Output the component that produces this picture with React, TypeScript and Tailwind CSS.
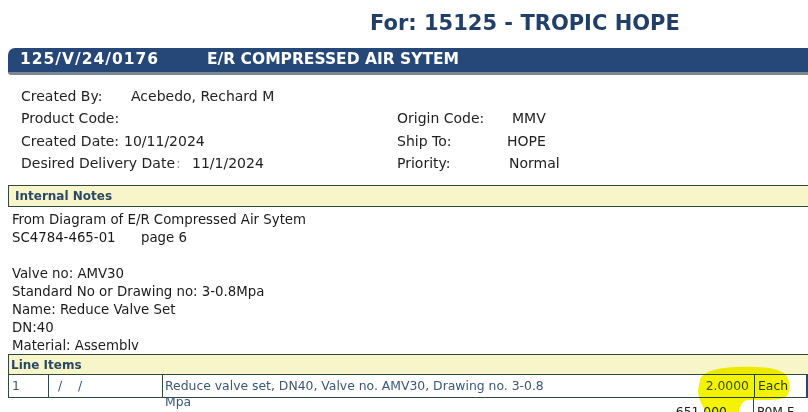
import React from "react";

const verdana = { fontFamily: '"DejaVu Sans", Verdana, sans-serif' };
const tahoma = { fontFamily: '"DejaVu Sans Condensed", "Liberation Sans", sans-serif' };

function InfoRow({ label, value, labelW, className = "" }: { label: string; value?: string; labelW?: string; className?: string }) {
  return (
    <div className={`h-[22.5px] flex items-center whitespace-nowrap ${className}`}>
      <span className={labelW}>{label}</span>
      {value && <span>{value}</span>}
    </div>
  );
}

export default function App() {
  return (
    <div className="relative w-[808px] h-[412px] overflow-hidden bg-white text-[#222]" style={verdana}>
      {/* Title */}
      <div className="h-[48px] pl-[370px] pt-[9px] text-[21px] font-bold text-[#213f68] leading-[28px] whitespace-nowrap">
        For: 15125 - TROPIC HOPE
      </div>

      {/* Request header bar */}
      <div className="ml-2 h-[27px] bg-[#254878] rounded-tl-[7px] rounded-bl-[3px] border-b-[3px] border-[#7d8892] flex items-center text-white font-bold text-[15.5px] whitespace-nowrap">
        <span className="pl-[12px] w-[199px] tracking-[1px]">125/V/24/0176</span>
        <span>E/R COMPRESSED AIR SYTEM</span>
      </div>

      {/* Info */}
      <div className="pt-[10px] pl-[21px] grid grid-cols-[376px_1fr] text-[14px] h-[110px]">
        <div>
          <InfoRow label="Created By:" value="Acebedo, Rechard M" labelW="w-[110px]" />
          <InfoRow label="Product Code:" />
          <InfoRow label="Created Date: " value="10/11/2024" labelW="pr-[5px]" />
          <div className="h-[22.5px] flex items-center whitespace-nowrap">
            <span>Desired Delivery Date</span>
            <span className="text-[#999] pl-[1px] w-[17px]">:</span>
            <span>11/1/2024</span>
          </div>
        </div>
        <div className="pt-[22.5px]">
          <InfoRow label="Origin Code:" value="MMV" labelW="w-[115px]" />
          <InfoRow label="Ship To:" value="HOPE" labelW="w-[110px]" />
          <InfoRow label="Priority:" value="Normal" labelW="w-[112px]" />
        </div>
      </div>

      {/* Internal notes */}
      <div className="ml-2 h-[22px] bg-[#f8f6c9] border-y border-l border-[#2d4a3c] flex items-center pl-[6px] text-[12px] font-bold text-[#2b4766]">
        Internal Notes
      </div>
      <div className="pl-[12px] pt-[3px] text-[14.8px] leading-[18px] text-[#1a1a1a] whitespace-pre" style={tahoma}>
        <div>From Diagram of E/R Compressed Air Sytem</div>
        <div>SC4784-465-01      page 6</div>
        <div>&nbsp;</div>
        <div>Valve no: AMV30</div>
        <div>Standard No or Drawing no: 3-0.8Mpa</div>
        <div>Name: Reduce Valve Set</div>
        <div>DN:40</div>
        <div>Material: Assemblv</div>
      </div>

      {/* Line items */}
      <div className="ml-2 h-[21px] bg-[#f8f6c9] border-y border-l border-[#2d4a3c] flex items-center pl-[2px] text-[12px] font-bold text-[#2b4766]">
        Line Items
      </div>
      <div className="ml-2 h-[23px] border-b border-l border-[#2d4a3c] flex text-[12.4px] text-[#3b5775] leading-[16px]">
        <div className="w-[40px] pl-[3px] pt-[3px] border-r border-[#2d4a3c]">1</div>
        <div className="w-[114px] pl-[9px] pt-[3px] border-r border-[#2d4a3c] whitespace-pre">/    /</div>
        <div className="flex-1 pl-[2px] pt-[3px] whitespace-nowrap">
          <div>Reduce valve set, DN40, Valve no. AMV30, Drawing no. 3-0.8</div>
          <div>Mpa</div>
        </div>
        <div className="w-[80px] pt-[3px] pr-[5px] text-right">2.0000</div>
        <div className="w-[54px] pl-[3px] pt-[3px] border-l border-r-2 border-l-[#2d4a3c] border-r-[#254878] text-[#2d3e52]">Each</div>
      </div>
      <div className="ml-2 flex text-[12.4px] text-[#222] leading-[16px]">
        <div className="w-[745px] text-right pr-[26px] pt-[6px]">651.000</div>
        <div className="border-l border-[#2d4a3c] pl-[3px] pt-[6px] h-[20px]">P0M F</div>
      </div>

      {/* Marker highlight */}
      <svg className="absolute left-0 top-0 pointer-events-none mix-blend-multiply" width="808" height="412" viewBox="0 0 808 412">
        <path
          d="M700 380 C702 372 716 368 735 367 C755 366 775 367 784 373 C791 379 791 392 786 397 C778 401 760 400 748 400 C742 401 740 406 739 412 L706 412 C702 405 698 398 698 390 Z"
          fill="#f3f200"
        />
      </svg>
    </div>
  );
}
